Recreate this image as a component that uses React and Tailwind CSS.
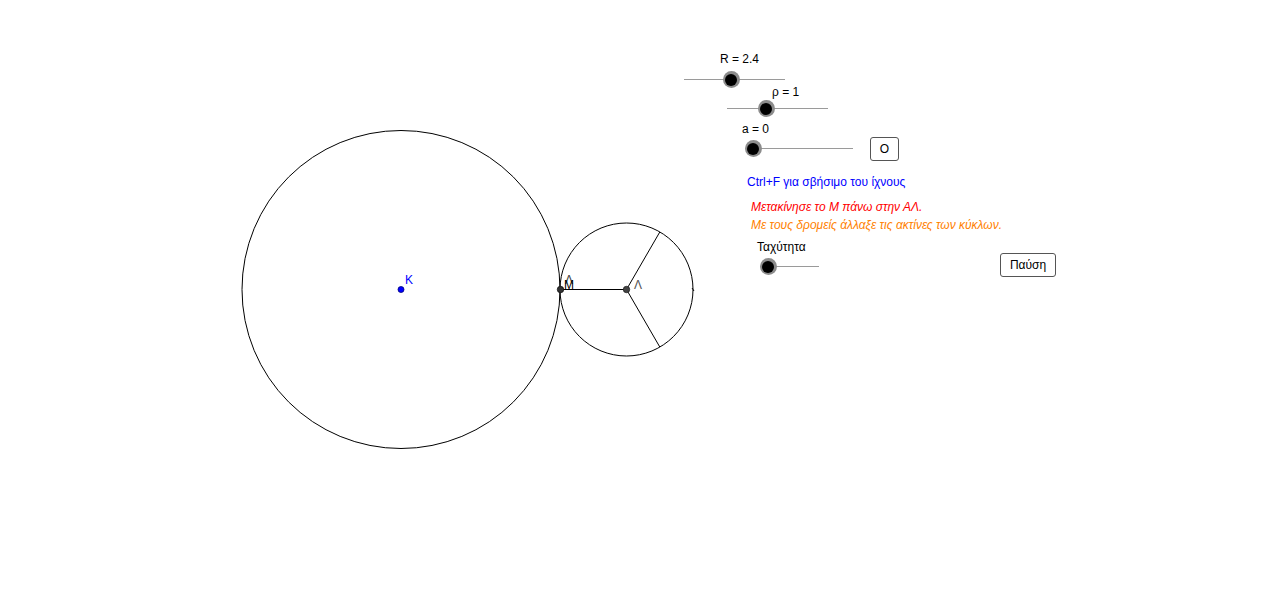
import React from "react";

const font = { fontFamily: '"Liberation Sans", Arial, sans-serif' };

const Slider = ({ x1, x2, y, knob }) => (
  <>
    <div
      className="absolute h-px bg-[#9a9a9a]"
      style={{ left: x1, top: y, width: x2 - x1 }}
    />
    <div
      className="absolute w-[17px] h-[17px] rounded-full bg-[#8c8c8c] flex items-center justify-center"
      style={{ left: knob - 8.5, top: y - 8 }}
    >
      <div className="w-[12px] h-[12px] rounded-full bg-black" />
    </div>
  </>
);

const Label = ({ x, y, className = "", children }) => (
  <div
    className={`absolute text-[12px] leading-none whitespace-nowrap ${className}`}
    style={{ left: x, top: y }}
  >
    {children}
  </div>
);

export default function App() {
  return (
    <div className="relative w-[1280px] h-[590px] bg-white overflow-hidden" style={font}>
      <svg className="absolute left-0 top-0" width="1280" height="590">
        <circle cx="401" cy="289.5" r="159" fill="none" stroke="#000" strokeWidth="1" />
        <circle cx="626.5" cy="289.5" r="66.5" fill="none" stroke="#000" strokeWidth="1" />
        <line x1="560" y1="289.5" x2="626.5" y2="289.5" stroke="#000" strokeWidth="1" />
        <line x1="626.5" y1="289.5" x2="659.8" y2="232" stroke="#000" strokeWidth="1" />
        <line x1="626.5" y1="289.5" x2="659.8" y2="347" stroke="#000" strokeWidth="1" />
        <line x1="692" y1="288" x2="694" y2="291" stroke="#000" strokeWidth="1" />
        <circle cx="401" cy="289.5" r="3" fill="#0000ff" stroke="#00007a" strokeWidth="0.8" />
        <circle cx="560.5" cy="289.5" r="3.2" fill="#333" stroke="#111" strokeWidth="0.8" />
        <circle cx="626.5" cy="289.5" r="3.2" fill="#444" stroke="#222" strokeWidth="0.8" />
      </svg>

      <Label x={405} y={274} className="text-[#0000ff] text-[11px]">Κ</Label>
      <Label x={565} y={274} className="text-[#444] text-[10px]">Λ</Label>
      <Label x={564} y={279} className="text-black text-[11px]">M</Label>
      <Label x={634} y={279} className="text-[#555] text-[12px]">Λ</Label>

      <Label x={720} y={53}>R = 2.4</Label>
      <Slider x1={684} x2={785} y={79} knob={731} />

      <Label x={772} y={86}>ρ = 1</Label>
      <Slider x1={727} x2={828} y={108} knob={766} />

      <Label x={742} y={123}>a = 0</Label>
      <Slider x1={753} x2={853} y={148} knob={753} />

      <button
        className="absolute left-[870px] top-[137px] w-[29px] h-[24px] border border-[#555] rounded-[3px] bg-white text-[12px] text-black flex items-center justify-center"
        style={font}
      >
        O
      </button>

      <Label x={747} y={176} className="text-[#0000ff]">Ctrl+F για σβήσιμο του ίχνους</Label>
      <Label x={751} y={201} className="text-[#ff0000] italic">Μετακίνησε το Μ πάνω στην ΑΛ.</Label>
      <Label x={751} y={219} className="text-[#ff7f00] italic">Με τους δρομείς άλλαξε τις ακτίνες των κύκλων.</Label>

      <Label x={757} y={241}>Ταχύτητα</Label>
      <Slider x1={768} x2={819} y={266} knob={768} />

      <button
        className="absolute left-[1000px] top-[253px] w-[56px] h-[24px] border border-[#555] rounded-[3px] bg-white text-[12px] text-black flex items-center justify-center"
        style={font}
      >
        Παύση
      </button>
    </div>
  );
}
